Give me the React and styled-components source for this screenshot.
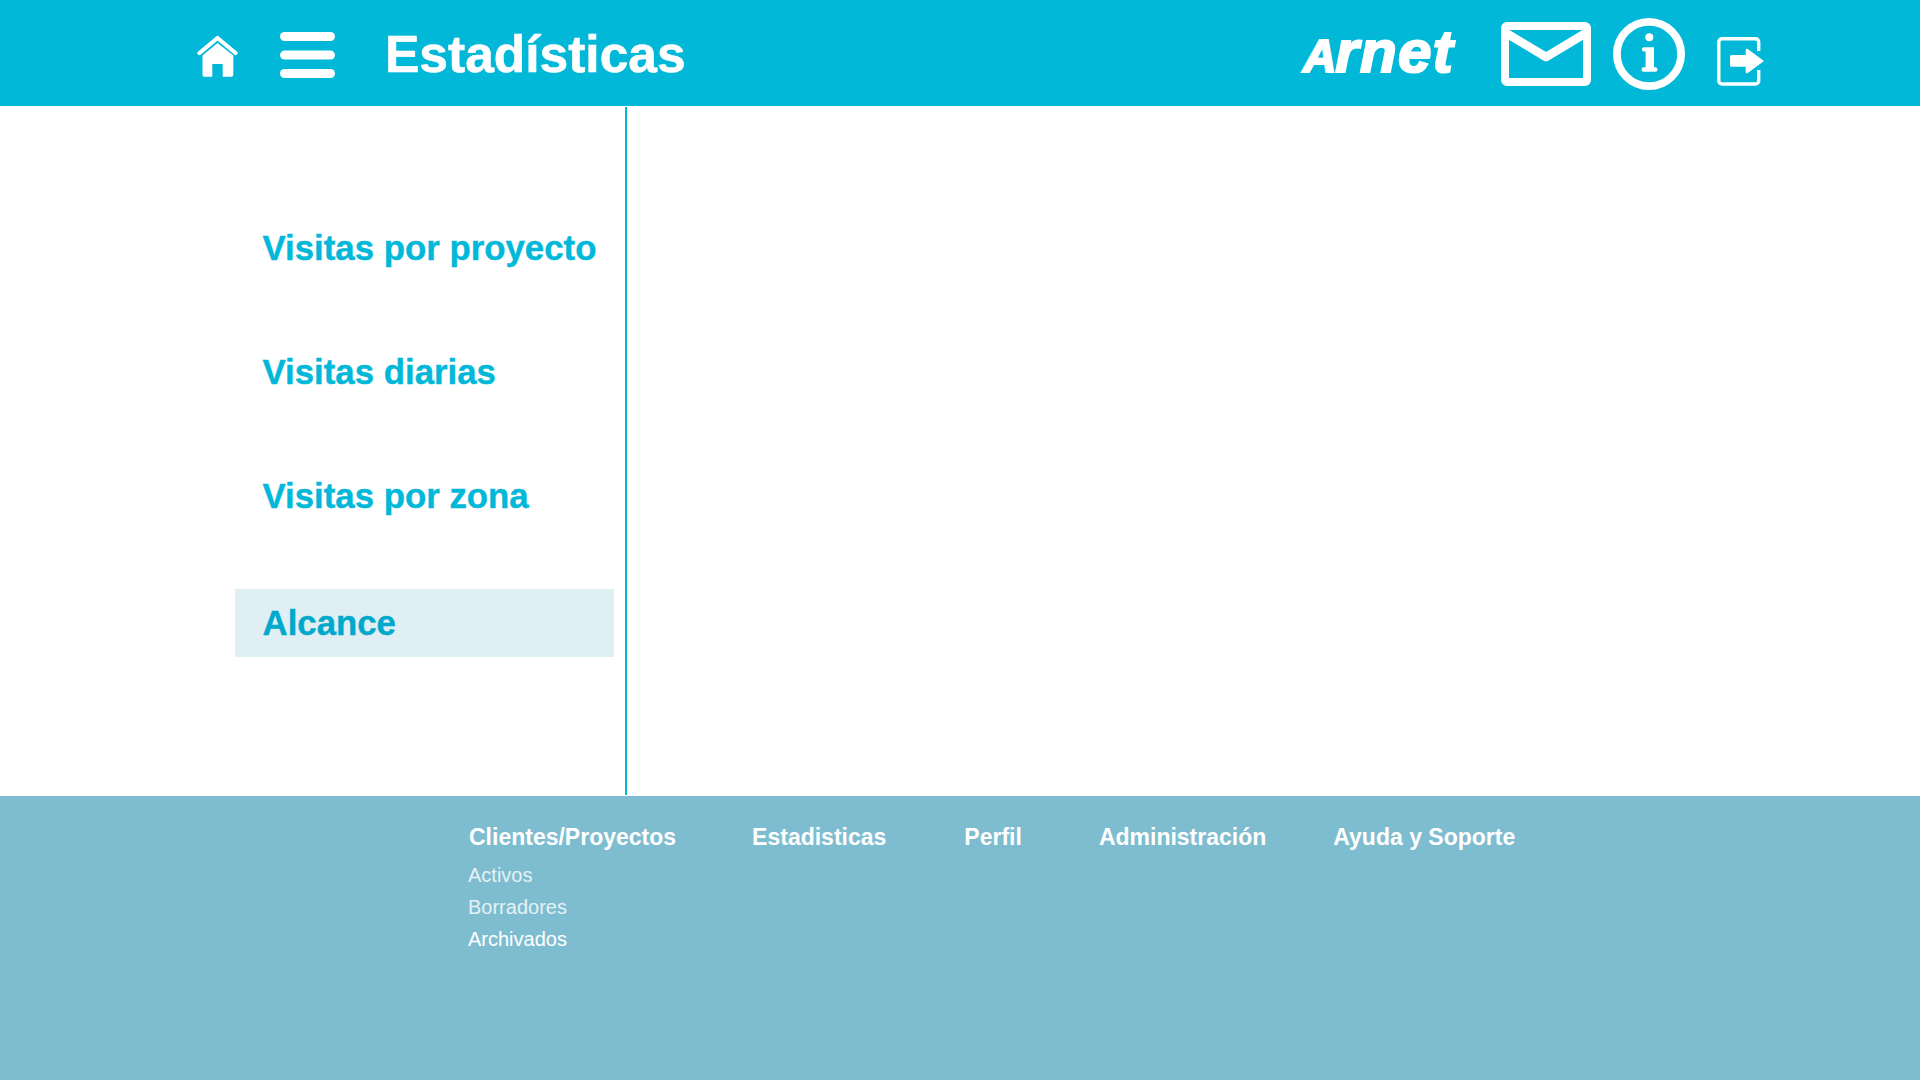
import React from 'react';
import styled, { createGlobalStyle } from 'styled-components';

const Global = createGlobalStyle`
  html, body { margin: 0; padding: 0; background: #fff; }
  body { font-family: "Liberation Sans", Arial, sans-serif; }
`;
const Page = styled.div`
  width: 1920px; height: 1080px; display: flex; flex-direction: column; overflow: hidden;
`;
const Header = styled.header`
  height: 106px; flex: none; background: #01b8d9; display: flex; align-items: flex-start;
  padding: 0 156px 0 197px; box-sizing: border-box; color: #fff;
`;
const IconSlot = styled.div`
  flex: none; display: flex; margin-top: ${p => p.$top}px; margin-left: ${p => p.$left || 0}px;
`;
const Title = styled.h1`
  margin: 24px 0 0 50px; font-size: 51.5px; line-height: 60px; font-weight: 700; color: #fff; white-space: nowrap;
  -webkit-text-stroke: 0.6px #fff;
`;
const Spacer = styled.div` flex: 1; `;
const Logo = styled.div`
  margin-top: 20px; width: 153px; font-size: 60px; line-height: 64px; font-weight: 700; font-style: italic;
  letter-spacing: 1.4px; color: #fff; -webkit-text-stroke: 2.2px #fff; white-space: nowrap;
`;
const LogoCap = styled.span`
  font-size: 46px; letter-spacing: -1px;
`;
const Main = styled.main`
  flex: 1; display: flex; padding: 1px 0; min-height: 0;
`;
const Sidebar = styled.nav`
  width: 627px; box-sizing: border-box; border-right: 2px solid #01b8d9;
  padding: 107px 11px 0 235px; display: flex; flex-direction: column;
`;
const Item = styled.a`
  display: flex; align-items: center; height: 68px; flex: none; padding-left: 27.5px;
  margin-bottom: ${p => p.$gap}px; font-size: 34.8px; font-weight: 700;
  -webkit-text-stroke: 0.4px currentColor;
  color: ${p => (p.$active ? '#00a9cc' : '#01b8d9')};
  background: ${p => (p.$active ? '#e0eff4' : 'transparent')};
`;
const Footer = styled.footer`
  height: 284px; flex: none; background: #7ebdd0; display: flex; align-items: flex-start;
  padding: 24px 0 0 468px; box-sizing: border-box; color: #fff;
`;
const Column = styled.div`
  margin-right: ${p => p.$gap}px; display: flex; flex-direction: column;
`;
const ColTitle = styled.div`
  font-size: 23px; line-height: 34px; font-weight: 700; white-space: nowrap; margin-bottom: 5px;
  padding-left: 1px;
`;
const SubLink = styled.a`
  font-size: 20px; line-height: 32px; color: #fff; opacity: ${p => (p.$active ? 1 : 0.8)};
`;

const HomeIcon = () => (
  <svg width="42" height="43" viewBox="0 0 42 43" fill="none">
    <path d="M2.5 18 L20.5 3 L38.5 18" stroke="#fff" strokeWidth="4.2" strokeLinecap="round" strokeLinejoin="round" />
    <path d="M5.5 20.5 L20.5 8 L36.3 20.5 V40 a1.7 1.7 0 0 1 -1.7 1.7 H25.7 V29 H15.3 V41.7 H7.2 a1.7 1.7 0 0 1 -1.7 -1.7 Z" fill="#fff" />
  </svg>
);
const MenuIcon = () => (
  <svg width="55" height="46" viewBox="0 0 55 46" fill="#fff">
    <rect x="0" y="0" width="55" height="9" rx="4.5" />
    <rect x="0" y="18.6" width="55" height="9" rx="4.5" />
    <rect x="0" y="37" width="55" height="9" rx="4.5" />
  </svg>
);
const MailIcon = () => (
  <svg width="90" height="64" viewBox="0 0 90 64">
    <rect x="4" y="4" width="82" height="56" rx="2" fill="none" stroke="#fff" strokeWidth="8" />
    <path d="M5 11 L45 35 L85 11" fill="none" stroke="#fff" strokeWidth="8.6" strokeLinejoin="round" />
  </svg>
);
const InfoIcon = () => (
  <svg width="72" height="72" viewBox="0 0 72 72" fill="#fff">
    <circle cx="36" cy="36" r="32.1" fill="none" stroke="#fff" strokeWidth="7.8" />
    <circle cx="36.3" cy="19.3" r="4" />
    <path d="M31 29.3 H41 V49.3 H42.3 a2.2 2.2 0 0 1 0 4.4 H30.7 a2.2 2.2 0 0 1 0 -4.4 H32.6 V33.5 H31 a2.1 2.1 0 0 1 0 -4.2 Z" />
  </svg>
);
const ExitIcon = () => (
  <svg width="47" height="49" viewBox="0 0 47 49" fill="none">
    <path d="M41.7 14 V5 a3.2 3.2 0 0 0 -3.2 -3.2 H5 a3.2 3.2 0 0 0 -3.2 3.2 V43.8 a3.2 3.2 0 0 0 3.2 3.2 H38.5 a3.2 3.2 0 0 0 3.2 -3.2 V33" stroke="#fff" strokeWidth="3.4" />
    <path d="M14.5 18 H28.7 V13 a1.2 1.2 0 0 1 2 -1 L47 24 L30.7 36 a1.2 1.2 0 0 1 -2 -1 V29.7 H14.5 a1.5 1.5 0 0 1 -1.5 -1.5 V19.5 A1.5 1.5 0 0 1 14.5 18 Z" fill="#fff" />
  </svg>
);

const items = [
  { label: 'Visitas por proyecto', gap: 56 },
  { label: 'Visitas diarias', gap: 56 },
  { label: 'Visitas por zona', gap: 59 },
  { label: 'Alcance', gap: 0, active: true },
];
const columns = [
  { title: 'Clientes/Proyectos', gap: 75, links: [['Activos'], ['Borradores'], ['Archivados', true]] },
  { title: 'Estadisticas', gap: 77, links: [] },
  { title: 'Perfil', gap: 76, links: [] },
  { title: 'Administración', gap: 66, links: [] },
  { title: 'Ayuda y Soporte', gap: 0, links: [] },
];

export default function App() {
  return (
    <Page>
      <Global />
      <Header>
        <IconSlot $top={35}><HomeIcon /></IconSlot>
        <IconSlot $top={32} $left={41}><MenuIcon /></IconSlot>
        <Title>Estadísticas</Title>
        <Spacer />
        <Logo><LogoCap>A</LogoCap>rnet</Logo>
        <IconSlot $top={22} $left={45}><MailIcon /></IconSlot>
        <IconSlot $top={18} $left={22}><InfoIcon /></IconSlot>
        <IconSlot $top={37} $left={32}><ExitIcon /></IconSlot>
      </Header>
      <Main>
        <Sidebar>
          {items.map(i => (
            <Item key={i.label} $gap={i.gap} $active={i.active}>{i.label}</Item>
          ))}
        </Sidebar>
      </Main>
      <Footer>
        {columns.map(c => (
          <Column key={c.title} $gap={c.gap}>
            <ColTitle>{c.title}</ColTitle>
            {c.links.map(([l, a]) => <SubLink key={l} $active={a}>{l}</SubLink>)}
          </Column>
        ))}
      </Footer>
    </Page>
  );
}
